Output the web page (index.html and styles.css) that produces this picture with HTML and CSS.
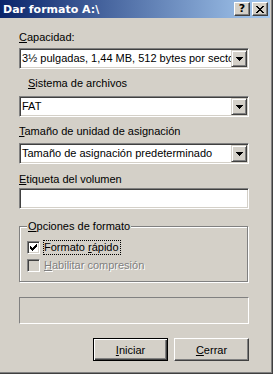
FILE: index.html
```html
<!doctype html>
<html lang="es">
  <head>
    <meta charset="utf-8">
    <title>Dar formato A:\</title>
    <link rel="stylesheet" href="styles.css">
  </head>
  <body>
    <div class="window">
      <div class="titlebar">
        <span class="title">Dar formato A:\</span>
        <div class="caption-buttons">
          <span class="cap-btn help">?</span>
          <span class="cap-btn">
            <svg width="8" height="7" viewBox="0 0 8 7" shape-rendering="crispEdges"><path d="M0 0h2v1h1v1h2v-1h1v-1h2v1h-1v1h-1v1h-1v1h1v1h1v1h1v1h-2v-1h-1v-1h-2v1h-1v1h-2v-1h1v-1h1v-1h1v-1h-1v-1h-1v-1h-1z"/></svg>
          </span>
        </div>
      </div>

      <div class="content">
        <div class="label l-cap"><u>C</u>apacidad:</div>
        <div class="combo c-cap">
          <span class="combo-text">3½ pulgadas, 1,44 MB, 512 bytes por sector</span>
          <span class="combo-btn"><svg width="7" height="4" viewBox="0 0 7 4" shape-rendering="crispEdges"><path d="M0 0h7v1h-1v1h-1v1h-1v1h-1v-1h-1v-1h-1v-1h-1z"/></svg></span>
        </div>

        <div class="label l-fs"><u>S</u>istema de archivos</div>
        <div class="combo c-fs">
          <span class="combo-text">FAT</span>
          <span class="combo-btn"><svg width="7" height="4" viewBox="0 0 7 4" shape-rendering="crispEdges"><path d="M0 0h7v1h-1v1h-1v1h-1v1h-1v-1h-1v-1h-1v-1h-1z"/></svg></span>
        </div>

        <div class="label l-alloc"><u>T</u>amaño de unidad de asignación</div>
        <div class="combo c-alloc">
          <span class="combo-text">Tamaño de asignación predeterminado</span>
          <span class="combo-btn"><svg width="7" height="4" viewBox="0 0 7 4" shape-rendering="crispEdges"><path d="M0 0h7v1h-1v1h-1v1h-1v1h-1v-1h-1v-1h-1v-1h-1z"/></svg></span>
        </div>

        <div class="label l-vol"><u>E</u>tiqueta del volumen</div>
        <div class="textbox"></div>

        <div class="group">
          <span class="legend"><u>O</u>pciones de formato</span>
          <div class="check-row">
            <span class="checkbox">
              <svg width="7" height="7" viewBox="0 0 7 7" shape-rendering="crispEdges"><path d="M6 0h1v1h-1z M5 1h2v1h-2z M0 2h1v1h-1z M4 2h3v1h-3z M0 3h2v1h-2z M3 3h3v1h-3z M0 4h5v1h-5z M1 5h3v1h-3z M2 6h1v1h-1z"/></svg>
            </span>
            <span class="check-label focused">Formato <u>r</u>ápido</span>
          </div>
          <div class="check-row disabled">
            <span class="checkbox"></span>
            <span class="check-label"><u>H</u>abilitar compresión</span>
          </div>
        </div>

        <div class="progress"></div>

        <div class="buttons">
          <span class="button default"><u>I</u>niciar</span>
          <span class="button"><u>C</u>errar</span>
        </div>
      </div>
    </div>
  </body>
</html>
```

FILE: styles.css
```css
html, body {
  margin: 0;
  padding: 0;
}
body {
  background: #fff;
  font: 11px "Liberation Sans", Arial, sans-serif;
  color: #000;
}
u {
  text-decoration: underline;
  text-underline-offset: 1px;
}

.window {
  box-sizing: border-box;
  width: 273px;
  height: 374px;
  background: #d4d0c8;
  border-right: 1px solid #404040;
  border-bottom: 1px solid #404040;
  box-shadow: inset -1px -1px 0 #808080;
}

.titlebar {
  width: 270px;
  height: 18px;
  background: linear-gradient(to right, #0a246a, #a6caf0);
  display: flex;
  align-items: center;
  justify-content: space-between;
}
.title {
  color: #fff;
  font: bold 11px "DejaVu Sans", sans-serif;
  padding-left: 3px;
}
.caption-buttons {
  display: flex;
  gap: 2px;
  padding-right: 2px;
}
.cap-btn {
  box-sizing: border-box;
  width: 16px;
  height: 14px;
  background: #d4d0c8;
  border: 1px solid;
  border-color: #fff #404040 #404040 #fff;
  box-shadow: inset -1px -1px 0 #808080;
  display: flex;
  align-items: center;
  justify-content: center;
}
.cap-btn.help {
  font: bold 11px "DejaVu Sans", sans-serif;
  line-height: 12px;
}

.content {
  width: 230px;
  padding-left: 19px;
  display: flex;
  flex-direction: column;
}
.label {
  line-height: 13px;
}
.l-cap { margin-top: 13px; }
.l-fs { margin-top: 8px; padding-left: 9px; }
.l-alloc { margin-top: 8px; }
.l-vol { margin-top: 9px; }

.combo, .textbox {
  box-sizing: border-box;
  height: 21px;
  background: #fff;
  border: 1px solid;
  border-color: #808080 #fff #fff #808080;
  box-shadow: inset 1px 1px 0 #404040, inset -1px -1px 0 #d4d0c8;
}
.combo {
  display: flex;
  padding: 1px;
}
.c-cap { margin-top: 4px; }
.c-fs { margin-top: 6px; }
.c-alloc { margin-top: 5px; }
.textbox { margin-top: 2px; }

.combo-text {
  flex: 1;
  overflow: hidden;
  white-space: nowrap;
  line-height: 17px;
  padding-left: 1px;
}
.combo-btn {
  box-sizing: border-box;
  width: 16px;
  height: 17px;
  background: #d4d0c8;
  border: 1px solid;
  border-color: #d4d0c8 #404040 #404040 #d4d0c8;
  box-shadow: inset 1px 1px 0 #fff, inset -1px -1px 0 #808080;
  display: flex;
  align-items: center;
  justify-content: center;
}

.group {
  position: relative;
  box-sizing: border-box;
  width: 229px;
  height: 56px;
  margin-top: 17px;
  padding: 14px 0 0 7px;
  border: 1px solid #808080;
  box-shadow: inset 1px 1px 0 #fff, 1px 1px 0 #fff;
  display: flex;
  flex-direction: column;
  gap: 5px;
}
.legend {
  position: absolute;
  top: -7px;
  left: 7px;
  padding: 0 1px;
  line-height: 13px;
  background: #d4d0c8;
}
.check-row {
  height: 13px;
  display: flex;
  align-items: center;
  gap: 3px;
}
.checkbox {
  box-sizing: border-box;
  width: 13px;
  height: 13px;
  background: #fff;
  border: 1px solid;
  border-color: #808080 #fff #fff #808080;
  box-shadow: inset 1px 1px 0 #404040, inset -1px -1px 0 #d4d0c8;
  display: flex;
  align-items: center;
  justify-content: center;
}
.check-label {
  line-height: 13px;
  border: 1px solid transparent;
  padding-right: 1px;
}
.check-label.focused {
  border: 1px dotted #000;
}
.disabled .checkbox {
  background: #d4d0c8;
}
.disabled .check-label {
  color: #808080;
  text-shadow: 1px 1px 0 #fff;
}

.progress {
  box-sizing: border-box;
  height: 27px;
  margin-top: 15px;
  border: 1px solid;
  border-color: #808080 #fff #fff #808080;
}

.buttons {
  margin-top: 14px;
  display: flex;
  justify-content: flex-end;
  gap: 6px;
}
.button {
  box-sizing: border-box;
  width: 75px;
  height: 23px;
  border: 1px solid;
  border-color: #fff #404040 #404040 #fff;
  box-shadow: inset -1px -1px 0 #808080;
  display: flex;
  align-items: center;
  justify-content: center;
}
.button.default {
  border-color: #000;
  box-shadow: inset 1px 1px 0 #fff, inset -1px -1px 0 #404040, inset -2px -2px 0 #808080;
}
```
